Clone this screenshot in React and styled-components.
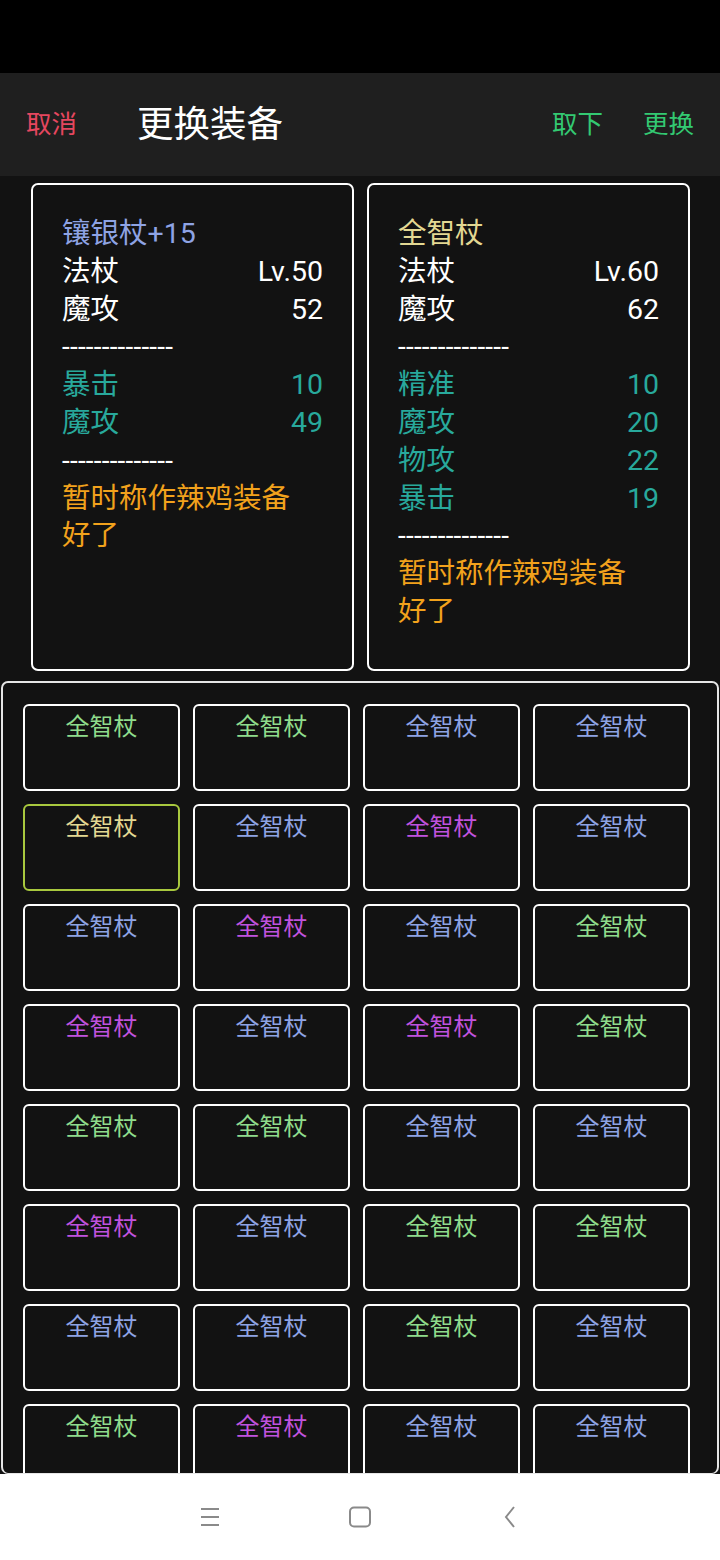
import React from "react";
import styled, { createGlobalStyle } from "styled-components";

const GlobalStyle = createGlobalStyle`
  html, body {
    margin: 0;
    padding: 0;
    background: #121212;
  }
  * {
    box-sizing: border-box;
  }
`;

const COLORS = {
  green: "#8fdc8c",
  blue: "#8ea3e4",
  purple: "#c052de",
  yellow: "#e3d892",
  teal: "#28a99c",
  orange: "#f2a21c",
  white: "#ffffff",
};

const Page = styled.div`
  width: 720px;
  height: 1560px;
  display: flex;
  flex-direction: column;
  font-family: Roboto, "Noto Sans CJK SC", sans-serif;
  background: #121212;
  overflow: hidden;
`;

const StatusBar = styled.div`
  height: 73px;
  flex-shrink: 0;
  background: #000;
`;

const Header = styled.header`
  height: 103px;
  flex-shrink: 0;
  display: flex;
  align-items: center;
  padding: 0 26px 6px 26px;
  background: #1f1f1f;
`;

const HeaderAction = styled.span`
  font-size: 25.5px;
  color: ${(p) => p.$color};
  & + & {
    margin-left: 40px;
  }
`;

const Title = styled.h1`
  margin: 0 auto 0 60px;
  font-size: 36.5px;
  font-weight: 400;
  color: #fff;
`;

const Content = styled.main`
  flex: 1;
  min-height: 0;
  display: flex;
  flex-direction: column;
  gap: 10px;
  padding-top: 7px;
`;

const CardRow = styled.div`
  display: flex;
  gap: 13px;
  padding: 0 30px 0 31px;
`;

const Card = styled.section`
  flex: 1;
  height: 488px;
  border: 2px solid #fff;
  border-radius: 7px;
  padding: 30px 29px 0;
  font-size: 28.5px;
  line-height: 37.8px;
`;

const Line = styled.div`
  display: flex;
  justify-content: space-between;
  color: ${(p) => p.$color || COLORS.white};
  white-space: pre-line;
`;

const Divider = styled.div`
  color: #fff;
  font-size: 28px;
  letter-spacing: 0.2px;
`;

const Panel = styled.section`
  flex: 1;
  min-height: 0;
  margin: 0 1px;
  border: 2px solid #e6e6e6;
  border-bottom-width: 1px;
  border-radius: 7px;
  overflow: hidden;
  padding: 21px 0 0 20px;
`;

const Grid = styled.div`
  display: grid;
  grid-template-columns: repeat(4, 157px);
  grid-auto-rows: 87px;
  column-gap: 13px;
  row-gap: 13px;
`;

const Slot = styled.div`
  border: 2px solid ${(p) => (p.$selected ? "#a8c83e" : "#fff")};
  border-radius: 6px;
  padding-top: 7px;
  text-align: center;
  font-size: 24px;
  line-height: 28px;
  color: ${(p) => p.$color};
`;

const NavBar = styled.nav`
  height: 86px;
  flex-shrink: 0;
  background: #fff;
  display: flex;
  justify-content: center;
  align-items: center;
  gap: 110px;
`;

const NavButton = styled.div`
  width: 40px;
  height: 40px;
  display: flex;
  align-items: center;
  justify-content: center;
`;

const rows = [
  ["green", "green", "blue", "blue"],
  ["yellow", "blue", "purple", "blue"],
  ["blue", "purple", "blue", "green"],
  ["purple", "blue", "purple", "green"],
  ["green", "green", "blue", "blue"],
  ["purple", "blue", "green", "green"],
  ["blue", "blue", "green", "blue"],
  ["green", "purple", "blue", "blue"],
];

const DASHES = "--------------";

function Stat({ label, value, color }) {
  return (
    <Line $color={color}>
      <span>{label}</span>
      <span>{value}</span>
    </Line>
  );
}

export default function App() {
  return (
    <Page>
      <GlobalStyle />
      <StatusBar />
      <Header>
        <HeaderAction $color="#e6475f">取消</HeaderAction>
        <Title>更换装备</Title>
        <HeaderAction $color="#33c972">取下</HeaderAction>
        <HeaderAction $color="#33c972">更换</HeaderAction>
      </Header>
      <Content>
        <CardRow>
          <Card>
            <Line $color={COLORS.blue}>镶银杖+15</Line>
            <Stat label="法杖" value="Lv.50" />
            <Stat label="魔攻" value="52" />
            <Divider>{DASHES}</Divider>
            <Stat label="暴击" value="10" color={COLORS.teal} />
            <Stat label="魔攻" value="49" color={COLORS.teal} />
            <Divider>{DASHES}</Divider>
            <Line $color={COLORS.orange}>{"暂时称作辣鸡装备\n好了"}</Line>
          </Card>
          <Card>
            <Line $color={COLORS.yellow}>全智杖</Line>
            <Stat label="法杖" value="Lv.60" />
            <Stat label="魔攻" value="62" />
            <Divider>{DASHES}</Divider>
            <Stat label="精准" value="10" color={COLORS.teal} />
            <Stat label="魔攻" value="20" color={COLORS.teal} />
            <Stat label="物攻" value="22" color={COLORS.teal} />
            <Stat label="暴击" value="19" color={COLORS.teal} />
            <Divider>{DASHES}</Divider>
            <Line $color={COLORS.orange}>{"暂时称作辣鸡装备\n好了"}</Line>
          </Card>
        </CardRow>
        <Panel>
          <Grid>
            {rows.flatMap((row, r) =>
              row.map((c, i) => (
                <Slot
                  key={`${r}-${i}`}
                  $color={COLORS[c]}
                  $selected={r === 1 && i === 0}
                >
                  全智杖
                </Slot>
              ))
            )}
          </Grid>
        </Panel>
      </Content>
      <NavBar>
        <NavButton>
          <svg width="22" height="20" viewBox="0 0 22 20">
            <g stroke="#8a8a8a" strokeWidth="2">
              <line x1="2" y1="2" x2="20" y2="2" />
              <line x1="2" y1="10" x2="20" y2="10" />
              <line x1="2" y1="18" x2="20" y2="18" />
            </g>
          </svg>
        </NavButton>
        <NavButton>
          <svg width="24" height="22" viewBox="0 0 24 22">
            <rect x="2" y="1.5" width="20" height="19" rx="4" fill="none" stroke="#8a8a8a" strokeWidth="2" />
          </svg>
        </NavButton>
        <NavButton>
          <svg width="14" height="22" viewBox="0 0 14 22">
            <polyline points="11,1 3,11 11,21" fill="none" stroke="#8a8a8a" strokeWidth="2" />
          </svg>
        </NavButton>
      </NavBar>
    </Page>
  );
}
